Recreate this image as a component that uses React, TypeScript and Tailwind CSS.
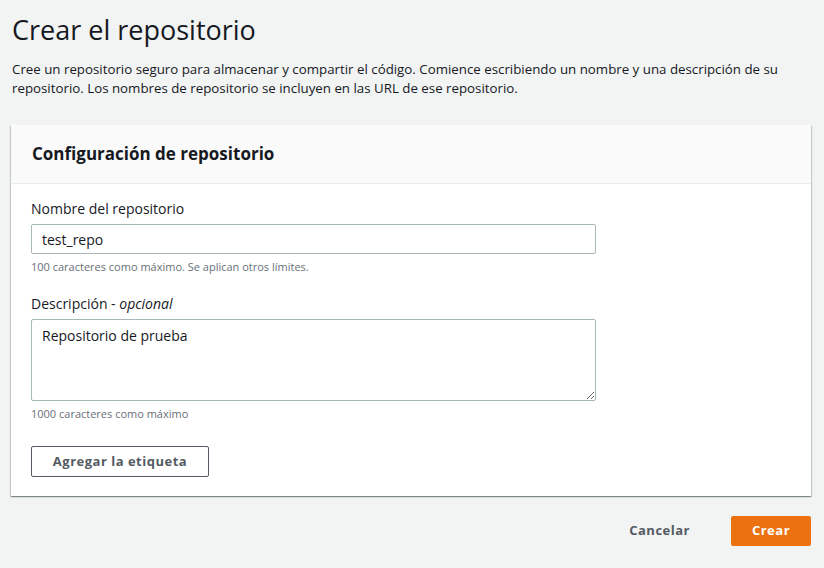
import React from 'react'

const font = { fontFamily: '"Open Sans", "Noto Sans", sans-serif' }

function Field({ label, optional, hint, children }: { label: string; optional?: boolean; hint: string; children: React.ReactNode }) {
  return (
    <div>
      <label className="block text-[14px] leading-[20px] text-[#16191f] mb-[5px]">
        {label}
        {optional && (
          <>
            {' - '}
            <i>opcional</i>
          </>
        )}
      </label>
      {children}
      <p className="mt-[5px] text-[11px] leading-[16px] text-[#687078]">{hint}</p>
    </div>
  )
}

export default function App() {
  return (
    <div className="min-h-[568px] bg-[#f2f3f3] px-[11px] pt-[10px] text-[#16191f]" style={font}>
      <h1 className="pl-[1px] text-[27px] leading-[40px] font-normal text-[#16191f]">Crear el repositorio</h1>
      <p className="mt-[10px] pl-[1px] pr-[20px] text-[13.3px] leading-[19px] text-[#16191f]">
        Cree un repositorio seguro para almacenar y compartir el código. Comience escribiendo un nombre y una descripción de su repositorio. Los nombres de repositorio se incluyen en las URL de ese repositorio.
      </p>

      <section className="mt-[27px] w-[800px] bg-white shadow-[0_1px_1px_0_rgba(0,28,36,0.3),1px_1px_1px_0_rgba(0,28,36,0.15),-1px_1px_1px_0_rgba(0,28,36,0.15)]">
        <div className="h-[59px] bg-[#fafafa] border-b border-[#eaeded] px-[21px] flex items-center">
          <h2 className="text-[17px] font-bold leading-[22px] text-[#16191f]">Configuración de repositorio</h2>
        </div>
        <div className="px-[20px] pt-[15px] pb-[19px] flex flex-col gap-[19px]">
          <Field label="Nombre del repositorio" hint="100 caracteres como máximo. Se aplican otros límites.">
            <input
              readOnly
              value="test_repo"
              className="block w-[565px] h-[30px] border border-[#aab7b8] rounded-[2px] px-[10px] text-[14px] text-[#16191f] outline-none bg-white"
            />
          </Field>
          <Field label="Descripción" optional hint="1000 caracteres como máximo">
            <textarea
              readOnly
              value="Repositorio de prueba"
              className="block w-[565px] h-[82px] border border-[#aab7b8] rounded-[2px] px-[10px] py-[6px] text-[14px] leading-[20px] text-[#16191f] outline-none bg-white"
            />
          </Field>
          <div className="pt-[5px]">
            <button className="h-[31px] w-[178px] border border-[#545b64] rounded-[2px] bg-white text-[13px] font-bold tracking-[0.5px] text-[#545b64]">
              Agregar la etiqueta
            </button>
          </div>
        </div>
      </section>

      <div className="w-[800px] mt-[20px] flex justify-end items-center gap-[21px]">
        <button className="h-[30px] px-[20px] text-[13px] font-bold tracking-[0.5px] text-[#545b64]">Cancelar</button>
        <button className="h-[30px] w-[80px] rounded-[2px] bg-[#ec7211] text-[13px] font-bold tracking-[0.5px] text-white">Crear</button>
      </div>
    </div>
  )
}
